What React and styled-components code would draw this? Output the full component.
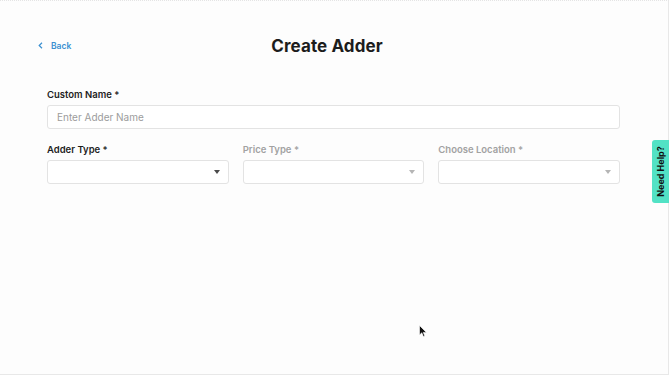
import React from "react";
import styled, { createGlobalStyle } from "styled-components";

const GlobalStyle = createGlobalStyle`
  html, body {
    margin: 0;
    padding: 0;
    background: #ffffff;
    font-family: Inter, "Noto Sans", "Liberation Sans", sans-serif;
  }
  * { box-sizing: border-box; }
`;

const Frame = styled.div`
  position: relative;
  width: 669px;
  height: 375px;
  background: #fdfdfd;
  border-top: 1px dotted #e4e4e4;
  border-right: 1px solid #e8e8e8;
  border-bottom: 1px solid #e8e8e8;
`;

const Header = styled.div`
  display: grid;
  grid-template-columns: 1fr auto 1fr;
  align-items: center;
  padding-top: 32px;
  height: 57px;
`;

const BackLink = styled.a`
  display: flex;
  align-items: center;
  gap: 8px;
  margin-left: 38px;
  color: #3a8fd0;
  font-size: 8.5px;
  font-weight: 600;
  text-decoration: none;
`;

const Title = styled.h1`
  margin: 0;
  transform: translateX(-7px);
  font-size: 17px;
  font-weight: 700;
  color: #1c1c1c;
  letter-spacing: 0.1px;
`;

const Form = styled.div`
  padding: 31px 48px 0 47px;
`;

const Label = styled.div`
  font-size: 9.5px;
  font-weight: 600;
  color: ${(p) => (p.$muted ? "#a2a2a2" : "#1e1e1e")};
  margin-bottom: 4px;
  height: 12px;
`;

const TextInput = styled.input`
  display: block;
  width: 100%;
  height: 24px;
  border: 1px solid #e3e3e3;
  border-radius: 3px;
  background: #fff;
  padding: 0 9px;
  font-family: inherit;
  font-size: 10px;
  outline: none;
  &::placeholder { color: #9c9c9c; }
`;

const Row = styled.div`
  display: grid;
  grid-template-columns: repeat(3, 1fr);
  gap: 14px;
  margin-top: 15px;
`;

const Select = styled.div`
  height: 24px;
  border: 1px solid #e3e3e3;
  border-radius: 3px;
  background: #fff;
  display: flex;
  align-items: center;
  justify-content: flex-end;
  padding-right: 8px;
`;

const Caret = styled.span`
  width: 0;
  height: 0;
  border-left: 3.5px solid transparent;
  border-right: 3.5px solid transparent;
  border-top: 4px solid ${(p) => (p.$muted ? "#b5b5b5" : "#4a4a4a")};
`;

const HelpTab = styled.div`
  position: absolute;
  right: -1px;
  top: 139px;
  width: 17px;
  height: 63px;
  background: #52e2c5;
  border-radius: 3px 0 0 3px;
  display: flex;
  align-items: center;
  justify-content: center;
`;

const HelpText = styled.span`
  transform: rotate(-90deg);
  white-space: nowrap;
  font-size: 9px;
  font-weight: 700;
  color: #111;
`;

const Cursor = styled.svg`
  position: absolute;
  left: 419px;
  top: 324px;
`;

const fields = [
  { label: "Adder Type *", muted: false },
  { label: "Price Type *", muted: true },
  { label: "Choose Location *", muted: true },
];

export default function App() {
  return (
    <>
      <GlobalStyle />
      <Frame>
        <Header>
          <BackLink href="#">
            <svg width="5" height="7" viewBox="0 0 5 7">
              <path d="M4 0.8 L1.2 3.5 L4 6.2" fill="none" stroke="#3a8fd0" strokeWidth="1.2" />
            </svg>
            Back
          </BackLink>
          <Title>Create Adder</Title>
          <div />
        </Header>
        <Form>
          <Label>Custom Name *</Label>
          <TextInput placeholder="Enter Adder Name" />
          <Row>
            {fields.map((f) => (
              <div key={f.label}>
                <Label $muted={f.muted}>{f.label}</Label>
                <Select>
                  <Caret $muted={f.muted} />
                </Select>
              </div>
            ))}
          </Row>
        </Form>
        <HelpTab>
          <HelpText>Need Help?</HelpText>
        </HelpTab>
        <Cursor width="8" height="13" viewBox="0 0 8 13">
          <path d="M0.5 0.5 L0.5 10 L2.8 7.8 L4.4 11.6 L5.8 11 L4.3 7.4 L7.4 7.4 Z" fill="#111" stroke="#fff" strokeWidth="0.6" />
        </Cursor>
      </Frame>
    </>
  );
}
